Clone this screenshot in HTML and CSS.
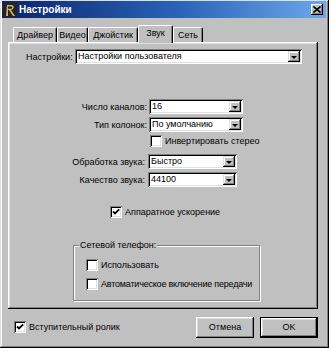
FILE: index.html
```html
<!DOCTYPE html>
<html>
<head>
    <title>Настройки</title>
    <link rel="stylesheet" href="styles.css">
</head>
<body>
    <div class="window">
        <!-- Заголовок окна -->
        <div class="titlebar">
            <svg class="app-icon" width="14" height="14" viewBox="0 0 14 14">
                <rect width="14" height="14" fill="#2a2418"/>
                <path d="M3 13 L4 2 L9 2 Q12 3 10 6 L8 7 L12 13 L10 13 L6 7 L5 7 L5 13 Z" fill="#c8b27a"/>
                <path d="M5 3.5 L8.5 3.5 Q10 4.5 8.5 5.8 L5 5.8 Z" fill="#2a2418"/>
            </svg>
            <span class="title">Настройки</span>
            <span class="close-btn">
                <svg width="8" height="7" viewBox="0 0 8 7">
                    <path d="M0.5 0.5 L7.5 6.5 M7.5 0.5 L0.5 6.5" stroke="#000" stroke-width="1.6"/>
                </svg>
            </span>
        </div>

        <div class="body">
            <!-- Вкладки -->
            <div class="tabs">
                <div class="tab tab-driver">Драйвер</div>
                <div class="tab tab-video">Видео</div>
                <div class="tab tab-joy">Джойстик</div>
                <div class="tab tab-sound active">Звук</div>
                <div class="tab tab-net">Сеть</div>
            </div>

            <div class="panel">
                <div class="row row-main">
                    <span class="label label-main">Настройки:</span>
                    <div class="combo combo-main"><span class="value">Настройки пользователя</span><span class="arrow"></span></div>
                </div>

                <div class="row row-channels">
                    <span class="label label-a">Число каналов:</span>
                    <div class="combo combo-a"><span class="value">16</span><span class="arrow"></span></div>
                </div>
                <div class="row row-speakers">
                    <span class="label label-a">Тип колонок:</span>
                    <div class="combo combo-a"><span class="value">По умолчанию</span><span class="arrow"></span></div>
                </div>
                <div class="row row-invert">
                    <span class="check"></span>
                    <span class="check-text">Инвертировать стерео</span>
                </div>

                <div class="row row-proc">
                    <span class="label label-b">Обработка звука:</span>
                    <div class="combo combo-b"><span class="value">Быстро</span><span class="arrow"></span></div>
                </div>
                <div class="row row-quality">
                    <span class="label label-b">Качество звука:</span>
                    <div class="combo combo-b"><span class="value">44100</span><span class="arrow"></span></div>
                </div>

                <div class="row row-accel">
                    <span class="check checked"></span>
                    <span class="check-text">Аппаратное ускорение</span>
                </div>

                <!-- Групповая рамка -->
                <div class="groupbox">
                    <span class="group-title">Сетевой телефон:</span>
                    <div class="row row-use">
                        <span class="check"></span>
                        <span class="check-text">Использовать</span>
                    </div>
                    <div class="row row-auto">
                        <span class="check"></span>
                        <span class="check-text">Автоматическое включение передачи</span>
                    </div>
                </div>
            </div>

            <div class="footer">
                <span class="check checked"></span>
                <span class="check-text">Вступительный ролик</span>
                <button class="btn btn-cancel">Отмена</button>
                <button class="btn btn-ok">OK</button>
            </div>
        </div>
    </div>
</body>
</html>
```

FILE: styles.css
```css
html, body {
    margin: 0;
    padding: 0;
    background-color: #c0c0c0;
}
body {
    font-family: "Liberation Sans", Arial, sans-serif;
    font-size: 9px;
    color: #000;
}
.window {
    width: 329px;
    height: 348px;
    box-sizing: border-box;
    padding: 1px 3px 3px 2px;
    background-color: #c0c0c0;
    box-shadow: inset -1px -1px #000, inset 1px 1px #dfdfdf, inset -2px -2px #808080, inset 2px 2px #fff;
}
.titlebar {
    height: 17px;
    display: flex;
    align-items: center;
    background: linear-gradient(to right, #0a246a, #2a64b8 55%, #6aa8ea);
}
.app-icon {
    margin-left: 1px;
    margin-right: 2px;
}
.title {
    color: #fff;
    font-weight: bold;
    font-size: 10px;
    flex: 1;
}
.close-btn {
    width: 12px;
    height: 11px;
    margin-right: 3px;
    box-sizing: border-box;
    background-color: #c0c0c0;
    display: flex;
    align-items: center;
    justify-content: center;
    box-shadow: inset -1px -1px #000, inset 1px 1px #fff, inset -2px -2px #808080;
}
.body {
    padding: 7px 8px 0 6px;
}

/* Вкладки */
.tabs {
    height: 17px;
    display: flex;
    align-items: flex-end;
    padding-left: 5px;
}
.tab {
    height: 15px;
    box-sizing: border-box;
    border-top: 1px solid #fff;
    border-left: 1px solid #fff;
    border-right: 1px solid #000;
    border-radius: 2px 2px 0 0;
    box-shadow: inset -1px 0 #808080;
    text-align: center;
    line-height: 14px;
}
.tab-driver { width: 44px; }
.tab-video { width: 31px; }
.tab-joy { width: 50px; }
.tab-sound { width: 35px; }
.tab-net { width: 30px; }
.tab.active {
    height: 18px;
    margin-bottom: -1px;
    line-height: 15px;
    background-color: #c0c0c0;
    position: relative;
    z-index: 1;
}

/* Панель вкладки */
.panel {
    height: 267px;
    box-sizing: border-box;
    padding-top: 7px;
    box-shadow: inset -1px -1px #000, inset 1px 1px #fff, inset -2px -2px #808080, inset 2px 2px #dfdfdf;
}
.row {
    display: flex;
    align-items: center;
    height: 15px;
}
.label {
    white-space: nowrap;
}
.label-main {
    margin-left: 18px;
    width: 49px;
}
.label-a {
    width: 139px;
    text-align: right;
    margin-right: 2px;
}
.label-b {
    width: 137px;
    text-align: right;
    margin-right: 3px;
}
.row-channels { margin-top: 35px; }
.row-speakers { margin-top: 3px; }
.row-invert {
    margin-top: 2px;
    height: 14px;
    padding-left: 142px;
}
.row-proc { margin-top: 6px; }
.row-quality { margin-top: 3px; }
.row-accel {
    margin-top: 18px;
    height: 14px;
    padding-left: 102px;
}

/* Выпадающие списки */
.combo {
    height: 15px;
    box-sizing: border-box;
    background-color: #fff;
    display: flex;
    align-items: center;
    padding: 2px;
    box-shadow: inset 1px 1px #808080, inset -1px -1px #fff, inset 2px 2px #000, inset -2px -2px #dfdfdf;
}
.combo-main { width: 227px; }
.combo-a { width: 94px; }
.combo-b { width: 89px; }
.combo .value {
    flex: 1;
    padding-left: 1px;
    white-space: nowrap;
    overflow: hidden;
    line-height: 11px;
}
.arrow {
    width: 12px;
    height: 11px;
    box-sizing: border-box;
    background-color: #c0c0c0;
    box-shadow: inset -1px -1px #000, inset 1px 1px #dfdfdf, inset -2px -2px #808080, inset 2px 2px #fff;
    display: flex;
    align-items: center;
    justify-content: center;
}
.arrow::after {
    content: "";
    border-left: 3px solid transparent;
    border-right: 3px solid transparent;
    border-top: 3px solid #000;
    margin-top: 1px;
}

/* Флажки */
.check {
    width: 12px;
    height: 12px;
    box-sizing: border-box;
    flex-shrink: 0;
    background-color: #fff;
    box-shadow: inset 1px 1px #808080, inset -1px -1px #fff, inset 2px 2px #000, inset -2px -2px #dfdfdf;
}
.check.checked {
    background: #fff url("data:image/svg+xml;utf8,<svg xmlns='http://www.w3.org/2000/svg' width='12' height='12'><path d='M3 5.5 L5 7.5 L9.2 3.3' stroke='black' stroke-width='1.8' fill='none'/></svg>") no-repeat center;
}
.check-text {
    margin-left: 3px;
    white-space: nowrap;
}

/* Сетевой телефон */
.groupbox {
    margin-top: 26px;
    margin-left: 65px;
    width: 187px;
    height: 56px;
    box-sizing: border-box;
    border: 1px solid #808080;
    box-shadow: inset 1px 1px #fff, 1px 1px #fff;
    padding-top: 1px;
}
.group-title {
    display: block;
    width: fit-content;
    margin: -8px 0 0 5px;
    padding: 0 1px;
    line-height: 12px;
    background-color: #c0c0c0;
}
.row-use {
    margin-top: 7px;
    height: 14px;
    padding-left: 12px;
}
.row-auto {
    margin-top: 5px;
    height: 14px;
    padding-left: 12px;
    letter-spacing: -0.2px;
}

/* Нижняя строка */
.footer {
    display: flex;
    align-items: center;
    height: 36px;
    padding-left: 6px;
}
.btn {
    width: 58px;
    height: 21px;
    box-sizing: border-box;
    border: none;
    padding: 0;
    font-family: "Liberation Sans", Arial, sans-serif;
    font-size: 9px;
    color: #000;
    background-color: #c0c0c0;
    box-shadow: inset -1px -1px #000, inset 1px 1px #fff, inset -2px -2px #808080, inset 2px 2px #dfdfdf;
}
.btn-cancel {
    margin-left: auto;
}
.btn-ok {
    margin-left: 6px;
    border: 1px solid #000;
    box-shadow: inset -1px -1px #000, inset 1px 1px #fff, inset -2px -2px #808080, inset 2px 2px #dfdfdf;
}
```
